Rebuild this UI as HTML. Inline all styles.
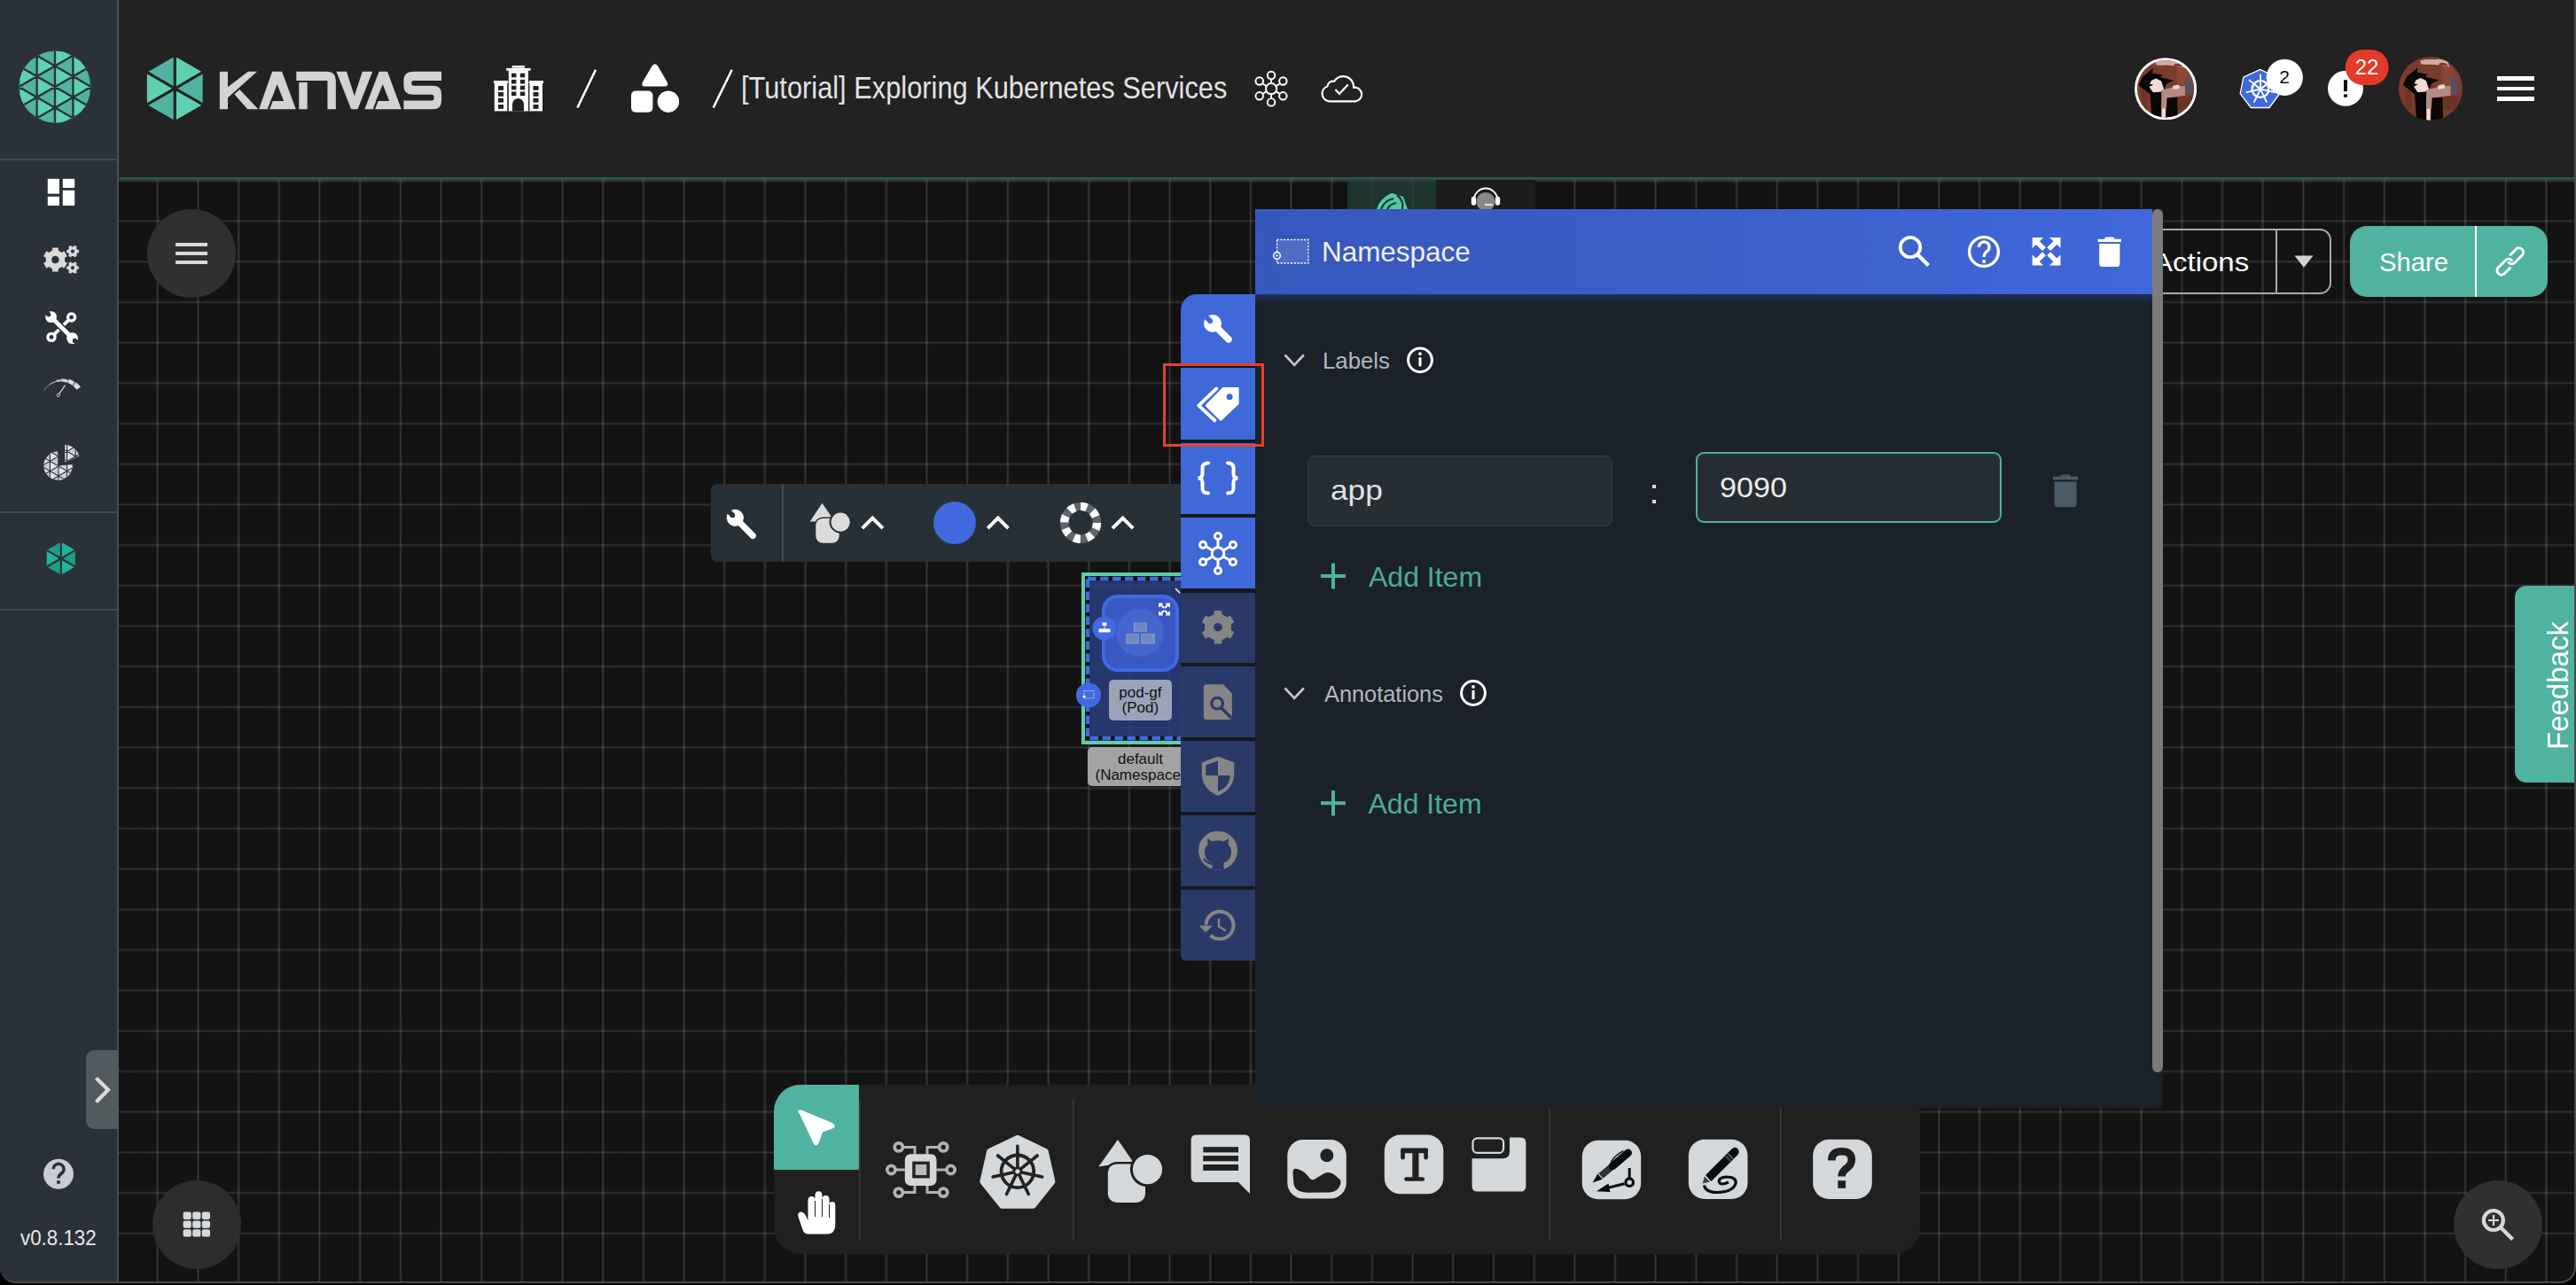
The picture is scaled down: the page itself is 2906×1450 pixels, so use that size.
<!DOCTYPE html>
<html><head><meta charset="utf-8">
<style>
*{box-sizing:border-box;margin:0;padding:0}
html,body{width:2906px;height:1450px;overflow:hidden;background:#000;font-family:"Liberation Sans",sans-serif}
.abs{position:absolute}
#win{position:absolute;left:0;top:0;width:2906px;height:1448px;border-right:2px solid #4a4a4a;border-bottom:2px solid #4a4a4a;border-bottom-left-radius:18px;border-bottom-right-radius:18px;overflow:hidden;background:#131313}
#grid{position:absolute;left:0;top:0;width:2906px;height:1448px;background-image:linear-gradient(to right,rgba(255,255,255,0) 0,rgba(255,255,255,.08) 0.6px,rgba(255,255,255,.155) 1.5px,rgba(255,255,255,.08) 2.4px,rgba(255,255,255,0) 3px,transparent 3px);background-size:45.68px 45.7px;background-position:176.3px 0}#gridh{position:absolute;left:0;top:0;width:2906px;height:1434px;background-image:linear-gradient(to bottom,rgba(255,255,255,0) 0,rgba(255,255,255,.07) 0.6px,rgba(255,255,255,.135) 1.5px,rgba(255,255,255,.07) 2.4px,rgba(255,255,255,0) 3px,transparent 3px);background-size:45.68px 45.7px;background-position:0 248.1px}
#header{position:absolute;left:0;top:0;width:2906px;height:200px;background:#222222}
#hline{position:absolute;left:134px;top:200px;width:2780px;height:6px;background:linear-gradient(to bottom,#2e5a54 0,#2e5a54 1.5px,rgba(46,80,74,.75) 2.5px,rgba(46,66,62,.45) 4px,rgba(40,50,50,0) 6px)}
#sidebar{position:absolute;left:0;top:0;width:134px;height:1448px;background:#2a3139;border-right:2px solid #474e54}
.sdiv{position:absolute;left:0;width:132px;height:2px;background:#444a52}
.t{position:absolute;white-space:nowrap;line-height:1}
</style></head><body>
<div id="win">
 <div id="grid"></div><div id="gridh"></div>
 <div id="header"></div>
<!--HEADER--><svg class="abs" style="left:0;top:0" width="900" height="200" viewBox="0 0 900 200"><polygon points="197.3,99.8 197.3,63.6 228.7,81.7" fill="#5fd0ad"/><polygon points="197.3,99.8 228.7,81.7 228.7,117.9" fill="#50b3a1"/><polygon points="197.3,99.8 228.7,117.9 197.3,136.0" fill="#5fd0ad"/><polygon points="197.3,99.8 197.3,136.0 165.9,117.9" fill="#50b3a1"/><polygon points="197.3,99.8 165.9,117.9 165.9,81.7" fill="#5fd0ad"/><polygon points="197.3,99.8 165.9,81.7 197.3,63.6" fill="#50b3a1"/><path d="M197.3,99.8L197.3,63.6M197.3,99.8L228.7,81.7M197.3,99.8L228.7,117.9M197.3,99.8L197.3,136.0M197.3,99.8L165.9,117.9M197.3,99.8L165.9,81.7" stroke="#222222" stroke-width="3.2" stroke-linecap="round"/><g transform="translate(240,70) scale(0.10481)" fill="#d3d3d3"><path d="M75,103H162V508H75Z"/><path d="M162,270L380,103H478L162,385Z"/><path d="M232,345L290,295L490,508H375Z"/><path fill-rule="evenodd" d="M497,508L640,103H745L895,508H612L590,508ZM693,240L765,420H625Z"/><path d="M900,103H1230Q1325,103 1325,200V508H1235V200H900Z"/><path d="M928,218H1018V508H928Z"/><path d="M1330,103H1440L1525,365L1610,103H1720L1560,508H1490Z"/><path fill-rule="evenodd" d="M1635,508L1790,103H1880L2030,508ZM1830,240L1900,420H1755Z"/><path d="M2160,103H2462V200H2165Q2140,200 2140,222V235Q2140,255 2162,255H2370Q2462,255 2462,345V415Q2462,508 2370,508H2055V415H2358Q2380,415 2380,395V370Q2380,350 2358,350H2150Q2055,350 2055,255V200Q2055,103 2160,103Z"/></g><g transform="translate(240,70) scale(0.10481)" stroke="#222222" stroke-width="22"><path d="M600,508L650,380"/><path d="M1735,508L1785,380"/></g><g fill="#ffffff"><rect x="577.6" y="74" width="14.2" height="2.6"/><rect x="571.2" y="76.9" width="27.4" height="2.9"/><rect x="573.8" y="79.5" width="22.2" height="45.9"/><rect x="556.9" y="91" width="16" height="3"/><rect x="597" y="91" width="16" height="3"/><rect x="557.8" y="93.5" width="16" height="31.9"/><rect x="596" y="93.5" width="16" height="31.9"/></g><g fill="#222222"><rect x="577" y="82.7" width="5.4" height="4.6"/><rect x="577" y="89.9" width="5.4" height="4.6"/><rect x="577" y="96.7" width="5.4" height="4.6"/><rect x="577" y="103.5" width="5.4" height="4.6"/><rect x="586.8" y="82.7" width="5.4" height="4.6"/><rect x="586.8" y="89.9" width="5.4" height="4.6"/><rect x="586.8" y="96.7" width="5.4" height="4.6"/><rect x="586.8" y="103.5" width="5.4" height="4.6"/><rect x="562" y="97" width="6" height="4.8"/><rect x="562" y="104" width="6" height="4.8"/><rect x="562" y="110.8" width="6" height="4.8"/><rect x="562" y="118" width="6" height="4.8"/><rect x="601.5" y="97" width="6" height="4.8"/><rect x="601.5" y="104" width="6" height="4.8"/><rect x="601.5" y="110.8" width="6" height="4.8"/><rect x="601.5" y="118" width="6" height="4.8"/><path d="M578,125.4V117.5A6.5,6.5 0 0 1 591,117.5V125.4Z"/><rect x="572.2" y="94" width="1.6" height="31.4"/><rect x="596" y="94" width="1.4" height="31.4"/></g><path d="M672,78.8L651.4,121.5M825.7,78.8L804.7,121.5" stroke="#fff" stroke-width="2.6"/><g fill="#fff"><path d="M735.5,74.5Q738.8,70 742.1,74.5L752.6,92.5Q755,97.6 749.5,97.6H728Q722.5,97.6 725,92.5Z"/><rect x="712" y="102.5" width="24.4" height="24.3" rx="5"/><circle cx="753.9" cy="114.7" r="12.2"/></g></svg><svg class="abs" style="left:1405px;top:70px" width="140" height="60" viewBox="0 0 2576 1104"><g stroke="#fff" stroke-width="36" fill="none"><circle cx="535" cy="555" r="112"/><circle cx="535" cy="275" r="78"/><circle cx="535" cy="835" r="78"/><circle cx="290" cy="395" r="78"/><circle cx="780" cy="395" r="78"/><circle cx="290" cy="705" r="78"/><circle cx="780" cy="705" r="78"/><path d="M535,443V353M535,667V757M437,500L358,450M633,500L712,450M437,610L358,660M633,610L712,660"/><path d="M1740,815H2290A135,135 0 0 0 2245,530A216,216 0 0 0 1845,400A118,118 0 0 0 1700,505A160,160 0 0 0 1740,815Z" stroke-width="40" stroke-linejoin="round"/><path d="M1865,570L1950,660L2130,470" stroke-width="40"/></g></svg><div class="t" id="title" style="left:836px;top:81px;font-size:35px;color:#e2e2e2;transform:scaleX(0.88);transform-origin:0 0">[Tutorial] Exploring Kubernetes Services</div><svg width="0" height="0" style="position:absolute"><defs><clipPath id="avc"><circle cx="628" cy="640" r="470"/></clipPath><clipPath id="avc2"><circle cx="628" cy="640" r="513"/></clipPath><symbol id="avart" viewBox="0 0 1256 1280"><g><circle cx="628" cy="640" r="520" fill="#7b3c2e"/>
<path d="M800,300Q900,250 1000,330L1080,520L1000,600L820,560Z" fill="#8a4634"/>
<path d="M460,190Q560,160 700,175Q760,150 900,200L930,290L800,270Q700,250 620,250Q520,260 470,240Z" fill="#d6aaa2"/>
<path d="M760,240Q830,200 900,250L900,280Q820,260 770,270Z" fill="#7b3c2e"/>
<path d="M180,580L250,440L420,300L410,380L580,410L540,450L760,500L640,560L610,650L520,700L440,760L380,740Z" fill="#0a0606"/>
<path d="M345,590L395,500L470,468L555,512L605,662L475,718L430,712Z" fill="#f0dcd2"/><path d="M320,548L425,572L350,612Z" fill="#0a0606"/>
<path d="M370,700L560,690L570,1150L400,1150Z" fill="#0a0606"/>
<path d="M560,660L760,610L950,590L950,750L660,790L650,960L555,960Z" fill="#b48a86"/>
<path d="M740,600Q800,560 860,580L850,640L750,650Z" fill="#e8d8c8"/>
<path d="M650,790L820,780L830,1150L630,1150Z" fill="#0a0606"/>
<path d="M560,960L625,960L625,1150L560,1150Z" fill="#f0dcd2"/>
<path d="M950,470L1060,450L1090,740L970,720Z" fill="#555060"/>
<path d="M830,780L1080,760L1060,960L840,980Z" fill="#6b3226"/>
<path d="M220,650Q300,640 320,700L330,1000L230,980Z" fill="#6e3428"/></g></symbol></defs></svg><svg class="abs" style="left:2407.9px;top:64.6px" width="70.2" height="70.5" viewBox="115 125 1026 1030"><circle cx="628" cy="640" r="513" fill="#fff"/><g clip-path="url(#avc)"><use href="#avart" x="0" y="0" width="1256" height="1280"/></g></svg><svg class="abs" style="left:2706px;top:64px" width="72" height="72" viewBox="115 127 1026 1026"><g clip-path="url(#avc2)"><use href="#avart" x="0" y="0" width="1256" height="1280"/></g></svg><svg class="abs" style="left:2515px;top:50px" width="190" height="80" viewBox="0 0 190 80"><polygon points="34.7,28.4 53.5,37.5 56.5,56.0 45.0,71.5 24.3,71.5 12.2,55.7 15.9,37.2" fill="#3f69dc" stroke="#fff" stroke-width="1.3" stroke-linejoin="round"/><circle cx="35" cy="50.5" r="9.4" fill="none" stroke="#fff" stroke-width="2.3"/><path d="M35.0,48.0L35.0,34.5M37.0,48.9L47.5,40.5M37.4,51.1L50.6,54.1M36.1,52.8L41.9,64.9M33.9,52.8L28.1,64.9M32.6,51.1L19.4,54.1M33.0,48.9L22.5,40.5" stroke="#fff" stroke-width="1.9" stroke-linecap="round"/><circle cx="35" cy="50.5" r="2.4" fill="#fff"/><circle cx="62.3" cy="37.3" r="20.6" fill="#fff"/><circle cx="131" cy="49.8" r="20" fill="#fff"/><rect x="129" y="40.2" width="4" height="12.9" fill="#111"/><rect x="129" y="56.4" width="4" height="3.3" fill="#111"/><rect x="130.9" y="5.9" width="48.7" height="40.2" rx="20.1" fill="#e5392a"/></svg><div class="t" style="left:2566px;top:76px;font-size:21px;color:#111;width:22px;text-align:center">2</div><div class="t" style="left:2650px;top:64px;font-size:24px;color:#fff;width:40px;text-align:center">22</div><div class="abs" style="left:2817px;top:86px;width:42px;height:5px;background:#fff"></div><div class="abs" style="left:2817px;top:97.8px;width:42px;height:4.6px;background:#fff"></div><div class="abs" style="left:2817px;top:109.4px;width:42px;height:4.6px;background:#fff"></div><!--/HEADER-->
 <div id="hline"></div>
<!--CANVAS1--><div class="abs" style="left:166px;top:235.8px;width:100px;height:100px;border-radius:50%;background:#303030"></div><div class="abs" style="left:197.8px;top:273.8px;width:36.4px;height:4.4px;background:#d5d9dc"></div><div class="abs" style="left:197.8px;top:283.7px;width:36.4px;height:4.4px;background:#d5d9dc"></div><div class="abs" style="left:197.8px;top:293.8px;width:36.4px;height:4.4px;background:#d5d9dc"></div><div class="abs" style="left:172px;top:1332px;width:100px;height:100px;border-radius:50%;background:#2d2d2d"></div><svg class="abs" style="left:200px;top:1360px" width="44" height="44" viewBox="200 1360 44 44" fill="#d5d9dc"><rect x="206.6" y="1367.6" width="9.2" height="8.4" rx="2.2"/><rect x="206.6" y="1377.4" width="9.2" height="8.4" rx="2.2"/><rect x="206.6" y="1387.2" width="9.2" height="8.4" rx="2.2"/><rect x="217.2" y="1367.6" width="9.2" height="8.4" rx="2.2"/><rect x="217.2" y="1377.4" width="9.2" height="8.4" rx="2.2"/><rect x="217.2" y="1387.2" width="9.2" height="8.4" rx="2.2"/><rect x="227.8" y="1367.6" width="9.2" height="8.4" rx="2.2"/><rect x="227.8" y="1377.4" width="9.2" height="8.4" rx="2.2"/><rect x="227.8" y="1387.2" width="9.2" height="8.4" rx="2.2"/></svg><div class="abs" style="left:2768px;top:1332px;width:100px;height:100px;border-radius:50%;background:#303030"></div><svg class="abs" style="left:2790px;top:1355px" width="60" height="60" viewBox="2790 1355 60 60"><circle cx="2812.9" cy="1377" r="11" fill="none" stroke="#d5d9dc" stroke-width="4.2"/><path d="M2821.5,1385.5L2834.5,1398.5" stroke="#d5d9dc" stroke-width="4.2"/><path d="M2807,1377H2819M2813,1371V1383" stroke="#d5d9dc" stroke-width="2.2"/></svg><!--/CANVAS1-->
<!--TB--><div class="abs" style="left:801.7px;top:546px;width:560px;height:88px;background:#283037;border-radius:7px"></div><div class="abs" style="left:882.4px;top:546px;width:2px;height:88px;background:#434a51"></div><svg class="abs" style="left:801px;top:546px" width="540" height="88" viewBox="801 546 540 88"><g fill="#fff"><circle cx="829.3" cy="584.3" r="9.6"/><path d="M829,584L849.3,604.5" stroke="#fff" stroke-width="7.2" stroke-linecap="round"/></g><path d="M826,581L818,573" stroke="#283037" stroke-width="5.6"/><circle cx="826.4" cy="581.4" r="2.8" fill="#283037"/><path d="M927.5,567.8L941.7,588.5L913.7,588.5Z" fill="#dcdcdc"/><rect x="918.8" y="583.4" width="29.4" height="30.9" rx="9.5" fill="#283037"/><rect x="920.3" y="584.9" width="26.4" height="27.9" rx="8" fill="#dcdcdc"/><circle cx="948.2" cy="589.2" r="12.6" fill="#283037"/><circle cx="948.2" cy="589.2" r="10.6" fill="#dcdcdc"/><path d="M972.7,596.1L984.3,584.6L995.9,596.1" stroke="#fff" stroke-width="4" fill="none"/><path d="M1114.2,596.1L1125.8,584.6L1137.4,596.1" stroke="#fff" stroke-width="4" fill="none"/><path d="M1255.0,596.1L1266.6,584.6L1278.2,596.1" stroke="#fff" stroke-width="4" fill="none"/><circle cx="1077" cy="590" r="24" fill="#4169dd"/><circle cx="1219.1" cy="589.8" r="18.4" fill="none" stroke="#5d6569" stroke-width="9.4"/><circle cx="1219.1" cy="589.8" r="18.4" fill="none" stroke="#fff" stroke-width="9.4" stroke-dasharray="7.225 7.225" transform="rotate(-90 1219.1 589.8)"/></svg><!--/TB-->
<!--BOTTOM--><div class="abs" style="left:2360px;top:258px;width:270.4px;height:74.3px;border:2px solid #a9a9a9;border-radius:13px"></div><div class="abs" style="left:2567px;top:259px;width:2px;height:72px;background:#a9a9a9"></div><div class="t" id="actt" style="left:2429px;top:280.5px;font-size:30px;color:#fff;transform:scaleX(1.1);transform-origin:0 0">Actions</div><svg class="abs" style="left:2585px;top:285px" width="30" height="20" viewBox="2585 285 30 20"><path d="M2588.5,288.5H2609.6L2599,301.7Z" fill="#d0d5d8"/></svg><div class="abs" style="left:2651px;top:255px;width:222.8px;height:79.7px;background:#50b2a0;border-radius:19px"></div><div class="abs" style="left:2792px;top:255px;width:2.4px;height:79.7px;background:#fff"></div><div class="t" id="sharet" style="left:2683.5px;top:281px;font-size:30px;color:#fff;transform:scaleX(0.975);transform-origin:0 0">Share</div><svg class="abs" style="left:2810px;top:272px" width="44" height="46" viewBox="2810 272 44 46" fill="none" stroke="#fff" stroke-width="3" stroke-linecap="round"><path d="M2832,287.5L2838.5,281A4.9,4.9 0 0 1 2845.4,287.9L2837,296.3A4.9,4.9 0 0 1 2830.1,296.3"/><path d="M2831.5,302.5L2825,309A4.9,4.9 0 0 1 2818.1,302.1L2826.5,293.7A4.9,4.9 0 0 1 2833.4,293.7"/></svg><div class="abs" style="left:2836.5px;top:660.7px;width:70px;height:222.3px;background:#50b2a0;border-radius:13px 0 0 13px"></div><div class="t" id="fbt" style="left:2868.5px;top:845.5px;font-size:33px;color:#fff;transform:rotate(-90deg);transform-origin:0 0">Feedback</div><div class="abs" style="left:873.2px;top:1224.2px;width:1293.1px;height:191.3px;background:#202020;border-radius:30px;overflow:hidden"><div class="abs" style="left:0;top:0;width:95.9px;height:95.9px;background:#50b2a0"></div></div><svg class="abs" style="left:873px;top:1224px" width="1294" height="192" viewBox="873 1224 1294 192"><rect x="968.9000000000001" y="1239.8" width="1.6" height="159.7" fill="#383838"/><rect x="1210.0" y="1239.8" width="1.6" height="159.7" fill="#383838"/><rect x="1747.1000000000001" y="1239.8" width="1.6" height="159.7" fill="#383838"/><rect x="2008.0" y="1239.8" width="1.6" height="159.7" fill="#383838"/><path d="M903,1256.5Q899,1253 903.5,1253.5L938.5,1268Q943,1271 938.5,1272.5L927.5,1276.5L922.5,1289.5Q920.5,1293.5 918.5,1289.5Z" fill="#fff" stroke="#fff" stroke-width="2" stroke-linejoin="round"/><path d="M906,1389L900.5,1373Q899,1368 903.5,1367.5Q907,1367.5 909,1372L911.5,1377V1354.5Q911.5,1350 915.5,1350Q919.5,1350 919.5,1354.5V1349Q919.5,1344.2 923.5,1344.2Q927.5,1344.2 927.5,1349V1353Q927.5,1349 931.5,1349Q935.5,1349 935.5,1353V1359Q935.5,1356 939,1356Q942.3,1356 942.3,1360V1381Q942.3,1392.5 933,1392.5H912Q908,1392.5 906,1389Z" fill="#fff"/><path d="M919.5,1355V1373M927.5,1353V1373M935.5,1359V1374" stroke="#202020" stroke-width="1" /><path d="M1013.8,1294.4H1032V1302.2M1064.2,1294.4H1046V1302.2M1013.8,1345.6H1032V1337.9M1064.2,1345.6H1046V1337.9M1005.4,1320H1020.8M1072.6,1320H1056.5" stroke="#b0b2b4" stroke-width="3" fill="none"/><g fill="#b0b2b4"><circle cx="1013.8" cy="1294.4" r="6.4"/><circle cx="1064.2" cy="1294.4" r="6.4"/><circle cx="1013.8" cy="1345.6" r="6.4"/><circle cx="1064.2" cy="1345.6" r="6.4"/><circle cx="1005.4" cy="1320" r="6.4"/><circle cx="1072.6" cy="1320" r="6.4"/></g><g fill="#202020"><circle cx="1013.8" cy="1294.4" r="2.7"/><circle cx="1064.2" cy="1294.4" r="2.7"/><circle cx="1013.8" cy="1345.6" r="2.7"/><circle cx="1064.2" cy="1345.6" r="2.7"/><circle cx="1005.4" cy="1320" r="2.7"/><circle cx="1072.6" cy="1320" r="2.7"/></g><rect x="1020.8" y="1302.2" width="35.7" height="35.7" rx="6.5" fill="#d5d8db"/><rect x="1029.2" y="1310.6" width="19.6" height="18.9" fill="#222"/><rect x="1032.7" y="1314" width="12.6" height="12" fill="#b8b9ba"/><polygon points="1147.9,1284.3 1179.2,1299.4 1186.9,1333.2 1165.3,1360.3 1130.5,1360.3 1108.9,1333.2 1116.6,1299.4" fill="#d5d8db" stroke="#d5d8db" stroke-width="7" stroke-linejoin="round"/><circle cx="1147.9" cy="1321.8" r="18.3" fill="none" stroke="#222" stroke-width="3.8"/><path d="M1147.9,1317.8L1147.9,1293.3M1151.0,1319.3L1170.2,1304.0M1151.8,1322.7L1175.7,1328.1M1149.6,1325.4L1160.3,1347.5M1146.2,1325.4L1135.5,1347.5M1144.0,1322.7L1120.1,1328.1M1144.8,1319.3L1125.6,1304.0" stroke="#222" stroke-width="3.6" stroke-linecap="round"/><circle cx="1147.9" cy="1321.8" r="5.5" fill="#222"/><circle cx="1147.9" cy="1321.8" r="2.6" fill="#d5d8db"/><path d="M1261,1286.1L1277.8,1310.5L1239.3,1316.5Z" fill="#d5d8db"/><rect x="1247.3" y="1310.9" width="47.2" height="48.5" rx="12.5" fill="#202020"/><rect x="1249.8" y="1313.4" width="42.2" height="43.5" rx="10" fill="#d5d8db"/><circle cx="1294.5" cy="1319.6" r="19.6" fill="#202020"/><circle cx="1294.5" cy="1319.6" r="16.6" fill="#d5d8db"/><path d="M1349.6,1280.5H1404Q1410,1280.5 1410,1286.5V1347L1397,1334H1349.6Q1343.6,1334 1343.6,1328V1286.5Q1343.6,1280.5 1349.6,1280.5Z" fill="#d5d8db"/><g fill="#202020"><rect x="1357.3" y="1294.2" width="39.7" height="6.2"/><rect x="1357.3" y="1304.1" width="39.7" height="6.2"/><rect x="1357.3" y="1314" width="39.7" height="6.9"/></g><rect x="1452.3" y="1286" width="66.5" height="66.5" rx="18" fill="#d5d8db"/><path d="M1458.5,1324Q1458,1316 1466,1320Q1472,1322 1477,1329Q1480,1333 1484,1330L1494,1324Q1500,1321 1506,1326L1511.5,1331Q1513.5,1333 1511.5,1338Q1509,1344.5 1500,1345.5L1476,1345.8Q1461,1345.5 1459.5,1336Z" fill="#202020"/><circle cx="1496.8" cy="1303.7" r="7.5" fill="#202020"/><rect x="1561.8" y="1280.6" width="66.5" height="66.7" rx="18" fill="#d5d8db"/><g fill="#202020"><rect x="1580.2" y="1295.5" width="30.7" height="5.8" rx="2.5"/><rect x="1580.2" y="1295.5" width="4.6" height="13" rx="2.3"/><rect x="1606.3" y="1295.5" width="4.6" height="13" rx="2.3"/><rect x="1593.3" y="1298" width="7.2" height="32"/><rect x="1584.2" y="1328.2" width="22.9" height="4.6" rx="2.3"/></g><path d="M1660.6,1307.3H1695.5Q1703,1307.3 1703,1299.5V1283.4H1715.4Q1721.4,1283.4 1721.4,1289.4V1338.5Q1721.4,1344.5 1715.4,1344.5H1666.6Q1660.6,1344.5 1660.6,1338.5Z" fill="#d5d8db"/><rect x="1661.5" y="1284.3" width="34.6" height="16.6" rx="5" fill="none" stroke="#d5d8db" stroke-width="2.2"/><rect x="1784.8" y="1286.8" width="66.4" height="66.4" rx="18" fill="#d5d8db"/><path d="M1796.6,1334.6L1807.7,1330.7L1802.4,1324.4Z" fill="#030c10"/><path d="M1805.9,1326.8L1818.4,1316.3" stroke="#2e3236" stroke-width="7.6"/><path d="M1819.3,1315.6L1836.6,1301.0" stroke="#030c10" stroke-width="8.8" stroke-linecap="round"/><path d="M1817.4,1311.2Q1820.9,1304.4 1831.3,1298.7" stroke="#030c10" stroke-width="1.4" fill="none"/><path d="M1838.2,1318V1330M1807,1342L1832.5,1335.8" stroke="#030c10" stroke-width="3"/><circle cx="1838.2" cy="1334.2" r="4.3" fill="none" stroke="#030c10" stroke-width="3.2"/><path d="M1801,1344.3L1814.5,1335.5L1816.5,1345Z" fill="#030c10"/><rect x="1904.9" y="1285.8" width="66.6" height="67.1" rx="18" fill="#d5d8db"/><path d="M1924,1326L1953,1297Q1957.5,1293 1960.5,1296.5Q1963.5,1300 1959.5,1304L1930.5,1333Z" fill="#030c10"/><path d="M1946.5,1304L1953,1310.5" stroke="#3a3f44" stroke-width="2.6"/><path d="M1949,1301.5L1955.5,1308" stroke="#d5d8db" stroke-width="1"/><path d="M1923,1327.5L1929,1333.5L1920.5,1335.5Z" fill="#3a3f44"/><path d="M1922.5,1337.5Q1924,1345.5 1937,1345.5Q1955,1345 1958,1335.5Q1959.5,1328 1947,1328Q1938,1329 1939.5,1334Q1941,1338 1950,1334" stroke="#030c10" stroke-width="3.2" fill="none"/><rect x="2045.2" y="1285.8" width="66.6" height="67.1" rx="18" fill="#d5d8db"/><path d="M2066.3,1309.5Q2066.5,1299.3 2077.6,1299.3Q2088.8,1299.3 2088.8,1308.5Q2088.8,1314 2083.5,1318Q2077.6,1322.5 2077.6,1327.5" stroke="#202020" stroke-width="8.6" fill="none"/><rect x="2073.3" y="1332.2" width="8.8" height="8.6" fill="#202020"/></svg><!--/BOTTOM-->
<!--P1--><div class="abs" style="left:1220px;top:646.4px;width:140px;height:193.6px;border:4.6px solid #5dcfa8"></div><div class="abs" style="left:1224.8px;top:651px;width:130px;height:184.5px;background:rgba(42,62,128,0.84)"></div><svg class="abs" style="left:1224px;top:650px" width="120" height="186" viewBox="1224 650 120 186"><rect x="1227" y="653" width="140" height="180" fill="none" stroke="#111" stroke-width="4.4"/><rect x="1227" y="653" width="140" height="180" fill="none" stroke="#4169e1" stroke-width="4.4" stroke-dasharray="9.5 4.5"/></svg><div class="abs" style="left:1243px;top:671px;width:86.5px;height:86.7px;border:4.5px solid #4169e1;border-radius:18px;background:rgba(60,92,204,0.9)"></div><div class="abs" style="left:1259px;top:687px;width:54px;height:54px;border-radius:50%;background:#4565cd"></div><svg class="abs" style="left:1225px;top:660px" width="115" height="110" viewBox="1225 660 115 110"><g fill="#7d8fc6"><rect x="1278.8" y="702.5" width="15.1" height="10.5"/><rect x="1270" y="715" width="15" height="11.6"/><rect x="1287" y="715" width="16" height="11.6"/></g><g stroke="#5d72b8" stroke-width="0.9"><path d="M1282,704V711.5M1285,704V711.5M1288,704V711.5M1291,704V711.5M1273,716.5V725M1276,716.5V725M1279,716.5V725M1282,716.5V725M1290,716.5V725M1293,716.5V725M1296,716.5V725M1299,716.5V725"/></g><g stroke="#fff" stroke-width="1.8" fill="none"><path d="M1309,682L1313,686M1318,682L1314,686M1309,693L1313,689M1318,693L1314,689"/><path d="M1308,685V681.5H1311.5M1319,685V681.5H1315.5M1308,690V693.5H1311.5M1319,690V693.5H1315.5"/></g><path d="M1326,664L1331,669" stroke="#fff" stroke-width="1.5"/><circle cx="1246" cy="709" r="13.6" fill="#4169e1"/><g fill="#fff"><rect x="1243.5" y="702.5" width="5" height="3.5"/><rect x="1239.5" y="709.5" width="13" height="4"/></g><path d="M1246,706V709.5" stroke="#fff" stroke-width="0.8"/></svg><svg class="abs" style="left:1210px;top:765px" width="40" height="40" viewBox="1210 765 40 40"><circle cx="1228" cy="784.4" r="14" fill="#4169e1"/><rect x="1223" y="779.5" width="11" height="8.5" fill="none" stroke="#c8d2f4" stroke-width="1" stroke-dasharray="1.5 1"/><circle cx="1223" cy="786" r="1.6" fill="#fff"/></svg><div class="abs" style="left:1251px;top:767px;width:70.8px;height:45.8px;background:#9aa3b8;border-radius:5px"></div><div class="t" style="left:1251px;top:772.5px;width:70.8px;text-align:center;font-size:17px;line-height:17.5px;color:#111;white-space:normal">pod-gf<br>(Pod)</div><div class="abs" style="left:1227.3px;top:843px;width:120px;height:44px;background:#a3a3a3;border-radius:5px"></div><div class="t" style="left:1227px;top:847.5px;width:119px;text-align:center;font-size:17px;line-height:18.5px;color:#111;white-space:normal">default<br>(Namespace)</div><div class="abs" style="left:1332px;top:332px;width:84px;height:751.5px;background:#151719;border-radius:18px 0 0 6px;overflow:hidden"><div class="abs" style="left:0;top:0.0px;width:84px;height:79.3px;background:#3f68d8"></div><div class="abs" style="left:0;top:83.3px;width:84px;height:80.7px;background:#3f68d8"></div><div class="abs" style="left:0;top:168.0px;width:84px;height:80.4px;background:#3f68d8"></div><div class="abs" style="left:0;top:252.3px;width:84px;height:79.7px;background:#3f68d8"></div><div class="abs" style="left:0;top:336.6px;width:84px;height:79.7px;background:#2a3a68"></div><div class="abs" style="left:0;top:420.4px;width:84px;height:79.8px;background:#2a3a68"></div><div class="abs" style="left:0;top:504.3px;width:84px;height:79.7px;background:#2a3a68"></div><div class="abs" style="left:0;top:588.0px;width:84px;height:80.0px;background:#2a3a68"></div><div class="abs" style="left:0;top:672.0px;width:84px;height:79.5px;background:#2a3a68"></div></div><svg class="abs" style="left:1332px;top:332px" width="84" height="752" viewBox="1332 332 84 752"><g><circle cx="1368" cy="365" r="10" fill="#fff"/><path d="M1368,365L1386,383" stroke="#fff" stroke-width="7.5" stroke-linecap="round"/><path d="M1365,362L1357,354" stroke="#3f68d8" stroke-width="5.6"/><circle cx="1365.2" cy="362.2" r="2.9" fill="#3f68d8"/></g><path d="M1372.3,438.5L1352.2,457.6L1370.5,474.5" stroke="#fff" stroke-width="3.8" fill="none" stroke-linejoin="round" stroke-linecap="round"/><path d="M1380,438.2H1396.4V455.5L1377.3,473.6L1361,457.6Z" fill="#fff" stroke="#fff" stroke-width="2.4" stroke-linejoin="round"/><circle cx="1387.1" cy="447.8" r="3.5" fill="#3f68d8"/><g fill="none" stroke="#fff" stroke-width="4" stroke-linecap="round"><path d="M1363,522.5Q1356.5,522.5 1356.5,528V534.5Q1356.5,539.5 1351.5,539.5Q1356.5,539.5 1356.5,544.5V551Q1356.5,556.5 1363,556.5"/><path d="M1385,522.5Q1391.5,522.5 1391.5,528V534.5Q1391.5,539.5 1396.5,539.5Q1391.5,539.5 1391.5,544.5V551Q1391.5,556.5 1385,556.5"/></g><g stroke="#fff" stroke-width="3" fill="none"><circle cx="1374" cy="624.5" r="6.8"/><circle cx="1374.0" cy="605.0" r="3.6"/><circle cx="1390.9" cy="614.8" r="3.6"/><circle cx="1390.9" cy="634.2" r="3.6"/><circle cx="1374.0" cy="644.0" r="3.6"/><circle cx="1357.1" cy="634.2" r="3.6"/><circle cx="1357.1" cy="614.8" r="3.6"/><path d="M1374.0,617.7L1374.0,608.6M1379.9,621.1L1387.8,616.5M1379.9,627.9L1387.8,632.5M1374.0,631.3L1374.0,640.4M1368.1,627.9L1360.2,632.5M1368.1,621.1L1360.2,616.5"/></g><path fill="#858585" fill-rule="evenodd" stroke="#858585" stroke-width="2" stroke-linejoin="round" d="M1370.62,693.50L1370.63,690.02L1377.37,690.02L1377.38,693.50L1384.61,697.67L1387.63,695.94L1391.00,701.78L1387.99,703.53L1387.99,711.87L1391.00,713.62L1387.63,719.46L1384.61,717.73L1377.38,721.90L1377.37,725.38L1370.63,725.38L1370.62,721.90L1363.39,717.73L1360.37,719.46L1357.00,713.62L1360.01,711.87L1360.01,703.53L1357.00,701.78L1360.37,695.94L1363.39,697.67ZM1379.80,707.70A5.8,5.8 0 1 0 1368.20,707.70A5.8,5.8 0 1 0 1379.80,707.70Z"/><path d="M1361,772.2H1380L1389.8,782.5V808.5Q1389.8,812 1386.3,812H1361.4Q1357.9,812 1357.9,808.5V775.7Q1357.9,772.2 1361,772.2Z" fill="#858585"/><circle cx="1373.1" cy="793.7" r="6.3" fill="none" stroke="#2a3a68" stroke-width="3.2"/><path d="M1377.5,798.5L1389,810" stroke="#2a3a68" stroke-width="3.6"/><path d="M1374,853.6L1392.3,860.5V873Q1392.3,890 1374,898Q1355.8,890 1355.8,873V860.5Z" fill="#858585"/><path d="M1374,858.5V875H1360.2V863.5Z M1374,875H1387.8Q1387,888 1374,893Z" fill="#2a3a68"/><circle cx="1374" cy="959.7" r="22" fill="#858585"/><path d="M1367.5,981.5V973.5Q1359,971 1359,961Q1359,956 1362.5,953L1362,946L1367.5,949.5Q1374,947.5 1380.5,949.5L1386,946L1385.5,953Q1389,956 1389,961Q1389,971 1380.5,973.5V981.5Z" fill="#2a3a68"/><path d="M1358,969Q1361,973.5 1367.5,975" stroke="#2a3a68" stroke-width="2.4" fill="none"/><path d="M1360.5,1043.5A15.5,15.5 0 1 1 1365.5,1055.5" stroke="#858585" stroke-width="4" fill="none"/><path d="M1352.6,1044.5H1368L1360.3,1052Z" fill="#858585"/><path d="M1375,1036.4V1045.5L1383,1050.3" stroke="#858585" stroke-width="2.4" fill="none"/></svg><!--/P1-->
<!--P2--><div class="abs" style="left:1520.2px;top:203px;width:99.8px;height:34px;background:rgba(34,64,58,0.75)"></div><div class="abs" style="left:1620px;top:203px;width:112px;height:34px;background:#1c1c1c"></div><svg class="abs" style="left:1520px;top:203px" width="212" height="34" viewBox="1520 203 212 34"><g fill="#4fc9a8"><path d="M1570,217.7L1583,222L1588,236H1553Q1556,224 1570,217.7Z"/></g><g stroke="#1e302e" stroke-width="2.2" fill="none"><path d="M1558,236Q1562,226 1572,224M1565,236Q1568,230 1575,229M1576,220Q1584,226 1582,236"/></g><circle cx="1676" cy="227.5" r="10.5" fill="#888"/><path d="M1662.5,226.5A13.5,14 0 0 1 1689.5,226.5" stroke="#fff" stroke-width="1.8" fill="none"/><rect x="1659.8" y="221.8" width="5.4" height="10" rx="2.7" fill="#fff"/><rect x="1686.8" y="221.8" width="5.4" height="10" rx="2.7" fill="#fff"/><path d="M1675,231H1684" stroke="#fff" stroke-width="1.5"/></svg><div class="abs" style="left:1416px;top:236px;width:1024px;height:1013.7px;background:#1a2128;border-radius:0 0 6px 0"></div><div class="abs" style="left:1416px;top:236px;width:1012px;height:96px;background:linear-gradient(to right,#3657bc,#3b5fc9 50%,#4068da)"></div><div class="abs" style="left:1416px;top:332px;width:1012px;height:12px;background:linear-gradient(to bottom,rgba(35,55,110,0.7),rgba(26,33,40,0))"></div><div class="abs" style="left:2427.9px;top:235.7px;width:12.1px;height:974px;background:#7b7b7b;border-radius:6px"></div><svg class="abs" style="left:1430px;top:260px" width="60" height="45" viewBox="1430 260 60 45"><rect x="1440.5" y="270.5" width="35.5" height="26.5" fill="rgba(255,255,255,0.13)" stroke="#fff" stroke-width="1.3" stroke-dasharray="2.2 1.6"/><circle cx="1440.5" cy="288.4" r="3.8" fill="#3657bc" stroke="#fff" stroke-width="1.6"/><circle cx="1440.5" cy="288.4" r="1.2" fill="#fff"/></svg><div class="t" id="nstitle" style="left:1491px;top:268px;font-size:32px;color:#f0f0f0;transform:scaleX(0.982);transform-origin:0 0">Namespace</div><svg class="abs" style="left:2130px;top:255px" width="280" height="60" viewBox="2130 255 280 60" fill="none" stroke="#fff"><circle cx="2155" cy="279" r="11.2" stroke-width="3.8"/><path d="M2163,287L2175.5,299.5" stroke-width="4.2"/><circle cx="2238" cy="284" r="16.4" stroke-width="3.4"/><path d="M2232.5,279A5.8,5.8 0 1 1 2241.5,283.5Q2238.2,285.8 2238.2,290" stroke-width="3.3"/><rect x="2236.4" y="293.2" width="3.6" height="3.6" fill="#fff" stroke="none"/><g fill="#fff" stroke="none"><path d="M2292.7,268.0L2305.2,268.0L2292.7,280.0Z"/><path d="M2292.7,299.4L2305.2,299.4L2292.7,287.4Z"/><path d="M2324.5,268.0L2312.0,268.0L2324.5,280.0Z"/><path d="M2324.5,299.4L2312.0,299.4L2324.5,287.4Z"/></g><path d="M2296.7,272.0L2306.0,281.1M2296.7,295.4L2306.0,286.3M2320.5,272.0L2311.2,281.1M2320.5,295.4L2311.2,286.3" stroke="#fff" stroke-width="5.4"/><g fill="#fff" stroke="none"><rect x="2366.6" y="269.8" width="26.4" height="3.2"/><path d="M2374,269.8Q2374,267.4 2376.5,267.4H2383Q2385.5,267.4 2385.5,269.8Z"/><path d="M2368.2,275H2391.4V297.5Q2391.4,301 2388,301H2371.6Q2368.2,301 2368.2,297.5Z"/></g></svg><svg class="abs" style="left:1440px;top:380px" width="200" height="50" viewBox="1440 380 200 50"><path d="M1449.5,400.5L1460.2,411.8L1470.8,400.5" stroke="#c8c8c8" stroke-width="2.6" fill="none"/><circle cx="1602" cy="406.3" r="13.4" fill="none" stroke="#fff" stroke-width="3"/><rect x="1600.5" y="403.3" width="3" height="10" fill="#fff"/><circle cx="1602" cy="399.2" r="1.9" fill="#fff"/></svg><div class="t" id="lbl1" style="left:1491.5px;top:394px;font-size:26px;color:#b3b7b9;transform:scaleX(0.99);transform-origin:0 0">Labels</div><div class="abs" style="left:1474.6px;top:514.3px;width:344px;height:79.3px;background:#272e33;border:1.5px solid #3a4146;border-radius:9px"></div><div class="t" id="appt" style="left:1501px;top:537px;font-size:32px;color:#e2e2e2;transform:scaleX(1.1);transform-origin:0 0">app</div><div class="abs" style="left:1864px;top:547px;width:4px;height:4px;background:#ddd"></div><div class="abs" style="left:1864px;top:564px;width:4px;height:4px;background:#ddd"></div><div class="abs" style="left:1913px;top:510.2px;width:344.8px;height:79.8px;background:#272e33;border:2.5px solid #4fb0a0;border-radius:9px"></div><div class="t" id="v9090" style="left:1940px;top:534.5px;font-size:31px;color:#ececec;transform:scaleX(1.1);transform-origin:0 0">9090</div><svg class="abs" style="left:2310px;top:530px" width="40" height="48" viewBox="2310 530 40 48" fill="#4a5a66"><rect x="2315.9" y="537.8" width="28.1" height="3.6"/><path d="M2324,537.8Q2324,535.6 2326.3,535.6H2333.6Q2335.9,535.6 2335.9,537.8Z"/><path d="M2317.5,543.5H2342.5V568.8Q2342.5,572.2 2339,572.2H2321Q2317.5,572.2 2317.5,568.8Z"/></svg><svg class="abs" style="left:1485px;top:630px" width="40" height="40" viewBox="1485 630 40 40"><path d="M1504,635.6V664.5M1490,650H1518" stroke="#50b2a0" stroke-width="4"/></svg><div class="t" id="add1" style="left:1544px;top:634.5px;font-size:32px;color:#4cab99">Add Item</div><svg class="abs" style="left:1440px;top:760px" width="250" height="50" viewBox="1440 760 250 50"><path d="M1449.5,776.5L1460.2,787.8L1470.8,776.5" stroke="#c8c8c8" stroke-width="2.6" fill="none"/><circle cx="1662" cy="782" r="13.4" fill="none" stroke="#fff" stroke-width="3"/><rect x="1660.5" y="779" width="3" height="10" fill="#fff"/><circle cx="1662" cy="774.9" r="1.9" fill="#fff"/></svg><div class="t" id="ann" style="left:1493.5px;top:770px;font-size:26px;color:#b3b7b9;transform:scaleX(0.975);transform-origin:0 0">Annotations</div><svg class="abs" style="left:1485px;top:885px" width="40" height="40" viewBox="1485 885 40 40"><path d="M1504,891.9V920.4M1490,906.2H1518" stroke="#50b2a0" stroke-width="4"/></svg><div class="t" id="add2" style="left:1543.5px;top:890.5px;font-size:32px;color:#4cab99">Add Item</div><div class="abs" style="left:1311.8px;top:410px;width:114px;height:93.5px;border:3px solid #e5422b"></div><!--/P2-->
 <div id="sidebar">
  <svg class="abs" style="left:0;top:0" width="132" height="180" viewBox="0 0 132 180">
<defs><clipPath id="lc"><circle cx="62.0" cy="98.0" r="40.5"/></clipPath></defs>
<g clip-path="url(#lc)"><rect x="0" y="0" width="132" height="180" fill="#4fb4a0"/>
<polygon points="-19.60,-43.34 -19.60,-19.78 0.80,-31.56" fill="#5ed1ae"/>
<polygon points="-19.60,-19.78 -19.60,3.78 0.80,-8.00" fill="#5ed1ae"/>
<polygon points="-19.60,3.78 -19.60,27.33 0.80,15.55" fill="#5ed1ae"/>
<polygon points="-19.60,27.33 -19.60,50.89 0.80,39.11" fill="#5ed1ae"/>
<polygon points="-19.60,50.89 -19.60,74.44 0.80,62.67" fill="#5ed1ae"/>
<polygon points="-19.60,74.44 -19.60,98.00 0.80,86.22" fill="#5ed1ae"/>
<polygon points="-19.60,98.00 -19.60,121.56 0.80,109.78" fill="#5ed1ae"/>
<polygon points="-19.60,121.56 -19.60,145.11 0.80,133.33" fill="#5ed1ae"/>
<polygon points="-19.60,145.11 -19.60,168.67 0.80,156.89" fill="#5ed1ae"/>
<polygon points="-19.60,168.67 -19.60,192.22 0.80,180.45" fill="#5ed1ae"/>
<polygon points="-19.60,192.22 -19.60,215.78 0.80,204.00" fill="#5ed1ae"/>
<polygon points="-19.60,215.78 -19.60,239.34 0.80,227.56" fill="#5ed1ae"/>
<polygon points="0.80,-31.56 0.80,-8.00 21.20,-19.78" fill="#5ed1ae"/>
<polygon points="0.80,-8.00 0.80,15.55 21.20,3.78" fill="#5ed1ae"/>
<polygon points="0.80,15.55 0.80,39.11 21.20,27.33" fill="#5ed1ae"/>
<polygon points="0.80,39.11 0.80,62.67 21.20,50.89" fill="#5ed1ae"/>
<polygon points="0.80,62.67 0.80,86.22 21.20,74.44" fill="#5ed1ae"/>
<polygon points="0.80,86.22 0.80,109.78 21.20,98.00" fill="#5ed1ae"/>
<polygon points="0.80,109.78 0.80,133.33 21.20,121.56" fill="#5ed1ae"/>
<polygon points="0.80,133.33 0.80,156.89 21.20,145.11" fill="#5ed1ae"/>
<polygon points="0.80,156.89 0.80,180.45 21.20,168.67" fill="#5ed1ae"/>
<polygon points="0.80,180.45 0.80,204.00 21.20,192.22" fill="#5ed1ae"/>
<polygon points="0.80,204.00 0.80,227.56 21.20,215.78" fill="#5ed1ae"/>
<polygon points="0.80,227.56 0.80,251.11 21.20,239.34" fill="#5ed1ae"/>
<polygon points="21.20,-43.34 21.20,-19.78 41.60,-31.56" fill="#5ed1ae"/>
<polygon points="21.20,-19.78 21.20,3.78 41.60,-8.00" fill="#5ed1ae"/>
<polygon points="21.20,3.78 21.20,27.33 41.60,15.55" fill="#5ed1ae"/>
<polygon points="21.20,27.33 21.20,50.89 41.60,39.11" fill="#5ed1ae"/>
<polygon points="21.20,50.89 21.20,74.44 41.60,62.67" fill="#5ed1ae"/>
<polygon points="21.20,74.44 21.20,98.00 41.60,86.22" fill="#5ed1ae"/>
<polygon points="21.20,98.00 21.20,121.56 41.60,109.78" fill="#5ed1ae"/>
<polygon points="21.20,121.56 21.20,145.11 41.60,133.33" fill="#5ed1ae"/>
<polygon points="21.20,145.11 21.20,168.67 41.60,156.89" fill="#5ed1ae"/>
<polygon points="21.20,168.67 21.20,192.22 41.60,180.45" fill="#5ed1ae"/>
<polygon points="21.20,192.22 21.20,215.78 41.60,204.00" fill="#5ed1ae"/>
<polygon points="21.20,215.78 21.20,239.34 41.60,227.56" fill="#5ed1ae"/>
<polygon points="41.60,-31.56 41.60,-8.00 62.00,-19.78" fill="#5ed1ae"/>
<polygon points="41.60,-8.00 41.60,15.55 62.00,3.78" fill="#5ed1ae"/>
<polygon points="41.60,15.55 41.60,39.11 62.00,27.33" fill="#5ed1ae"/>
<polygon points="41.60,39.11 41.60,62.67 62.00,50.89" fill="#5ed1ae"/>
<polygon points="41.60,62.67 41.60,86.22 62.00,74.44" fill="#5ed1ae"/>
<polygon points="41.60,86.22 41.60,109.78 62.00,98.00" fill="#5ed1ae"/>
<polygon points="41.60,109.78 41.60,133.33 62.00,121.56" fill="#5ed1ae"/>
<polygon points="41.60,133.33 41.60,156.89 62.00,145.11" fill="#5ed1ae"/>
<polygon points="41.60,156.89 41.60,180.45 62.00,168.67" fill="#5ed1ae"/>
<polygon points="41.60,180.45 41.60,204.00 62.00,192.22" fill="#5ed1ae"/>
<polygon points="41.60,204.00 41.60,227.56 62.00,215.78" fill="#5ed1ae"/>
<polygon points="41.60,227.56 41.60,251.11 62.00,239.34" fill="#5ed1ae"/>
<polygon points="62.00,-43.34 62.00,-19.78 82.40,-31.56" fill="#5ed1ae"/>
<polygon points="62.00,-19.78 62.00,3.78 82.40,-8.00" fill="#5ed1ae"/>
<polygon points="62.00,3.78 62.00,27.33 82.40,15.55" fill="#5ed1ae"/>
<polygon points="62.00,27.33 62.00,50.89 82.40,39.11" fill="#5ed1ae"/>
<polygon points="62.00,50.89 62.00,74.44 82.40,62.67" fill="#5ed1ae"/>
<polygon points="62.00,74.44 62.00,98.00 82.40,86.22" fill="#5ed1ae"/>
<polygon points="62.00,98.00 62.00,121.56 82.40,109.78" fill="#5ed1ae"/>
<polygon points="62.00,121.56 62.00,145.11 82.40,133.33" fill="#5ed1ae"/>
<polygon points="62.00,145.11 62.00,168.67 82.40,156.89" fill="#5ed1ae"/>
<polygon points="62.00,168.67 62.00,192.22 82.40,180.45" fill="#5ed1ae"/>
<polygon points="62.00,192.22 62.00,215.78 82.40,204.00" fill="#5ed1ae"/>
<polygon points="62.00,215.78 62.00,239.34 82.40,227.56" fill="#5ed1ae"/>
<polygon points="82.40,-31.56 82.40,-8.00 102.80,-19.78" fill="#5ed1ae"/>
<polygon points="82.40,-8.00 82.40,15.55 102.80,3.78" fill="#5ed1ae"/>
<polygon points="82.40,15.55 82.40,39.11 102.80,27.33" fill="#5ed1ae"/>
<polygon points="82.40,39.11 82.40,62.67 102.80,50.89" fill="#5ed1ae"/>
<polygon points="82.40,62.67 82.40,86.22 102.80,74.44" fill="#5ed1ae"/>
<polygon points="82.40,86.22 82.40,109.78 102.80,98.00" fill="#5ed1ae"/>
<polygon points="82.40,109.78 82.40,133.33 102.80,121.56" fill="#5ed1ae"/>
<polygon points="82.40,133.33 82.40,156.89 102.80,145.11" fill="#5ed1ae"/>
<polygon points="82.40,156.89 82.40,180.45 102.80,168.67" fill="#5ed1ae"/>
<polygon points="82.40,180.45 82.40,204.00 102.80,192.22" fill="#5ed1ae"/>
<polygon points="82.40,204.00 82.40,227.56 102.80,215.78" fill="#5ed1ae"/>
<polygon points="82.40,227.56 82.40,251.11 102.80,239.34" fill="#5ed1ae"/>
<polygon points="102.80,-43.34 102.80,-19.78 123.20,-31.56" fill="#5ed1ae"/>
<polygon points="102.80,-19.78 102.80,3.78 123.20,-8.00" fill="#5ed1ae"/>
<polygon points="102.80,3.78 102.80,27.33 123.20,15.55" fill="#5ed1ae"/>
<polygon points="102.80,27.33 102.80,50.89 123.20,39.11" fill="#5ed1ae"/>
<polygon points="102.80,50.89 102.80,74.44 123.20,62.67" fill="#5ed1ae"/>
<polygon points="102.80,74.44 102.80,98.00 123.20,86.22" fill="#5ed1ae"/>
<polygon points="102.80,98.00 102.80,121.56 123.20,109.78" fill="#5ed1ae"/>
<polygon points="102.80,121.56 102.80,145.11 123.20,133.33" fill="#5ed1ae"/>
<polygon points="102.80,145.11 102.80,168.67 123.20,156.89" fill="#5ed1ae"/>
<polygon points="102.80,168.67 102.80,192.22 123.20,180.45" fill="#5ed1ae"/>
<polygon points="102.80,192.22 102.80,215.78 123.20,204.00" fill="#5ed1ae"/>
<polygon points="102.80,215.78 102.80,239.34 123.20,227.56" fill="#5ed1ae"/>
<polygon points="123.20,-31.56 123.20,-8.00 143.60,-19.78" fill="#5ed1ae"/>
<polygon points="123.20,-8.00 123.20,15.55 143.60,3.78" fill="#5ed1ae"/>
<polygon points="123.20,15.55 123.20,39.11 143.60,27.33" fill="#5ed1ae"/>
<polygon points="123.20,39.11 123.20,62.67 143.60,50.89" fill="#5ed1ae"/>
<polygon points="123.20,62.67 123.20,86.22 143.60,74.44" fill="#5ed1ae"/>
<polygon points="123.20,86.22 123.20,109.78 143.60,98.00" fill="#5ed1ae"/>
<polygon points="123.20,109.78 123.20,133.33 143.60,121.56" fill="#5ed1ae"/>
<polygon points="123.20,133.33 123.20,156.89 143.60,145.11" fill="#5ed1ae"/>
<polygon points="123.20,156.89 123.20,180.45 143.60,168.67" fill="#5ed1ae"/>
<polygon points="123.20,180.45 123.20,204.00 143.60,192.22" fill="#5ed1ae"/>
<polygon points="123.20,204.00 123.20,227.56 143.60,215.78" fill="#5ed1ae"/>
<polygon points="123.20,227.56 123.20,251.11 143.60,239.34" fill="#5ed1ae"/>
<path d="M-19.60,0V180M0.80,0V180M21.20,0V180M41.60,0V180M62.00,0V180M82.40,0V180M102.80,0V180M123.20,0V180M143.60,0V180M-18.00,-230.86L142.00,-138.48M-18.00,-138.48L142.00,-230.86M-18.00,-207.30L142.00,-114.93M-18.00,-114.93L142.00,-207.30M-18.00,-183.75L142.00,-91.37M-18.00,-91.37L142.00,-183.75M-18.00,-160.19L142.00,-67.81M-18.00,-67.81L142.00,-160.19M-18.00,-136.64L142.00,-44.26M-18.00,-44.26L142.00,-136.64M-18.00,-113.08L142.00,-20.70M-18.00,-20.70L142.00,-113.08M-18.00,-89.52L142.00,2.85M-18.00,2.85L142.00,-89.52M-18.00,-65.97L142.00,26.41M-18.00,26.41L142.00,-65.97M-18.00,-42.41L142.00,49.96M-18.00,49.96L142.00,-42.41M-18.00,-18.86L142.00,73.52M-18.00,73.52L142.00,-18.86M-18.00,4.70L142.00,97.08M-18.00,97.08L142.00,4.70M-18.00,28.26L142.00,120.63M-18.00,120.63L142.00,28.26M-18.00,51.81L142.00,144.19M-18.00,144.19L142.00,51.81M-18.00,75.37L142.00,167.74M-18.00,167.74L142.00,75.37M-18.00,98.92L142.00,191.30M-18.00,191.30L142.00,98.92M-18.00,122.48L142.00,214.86M-18.00,214.86L142.00,122.48M-18.00,146.04L142.00,238.41M-18.00,238.41L142.00,146.04M-18.00,169.59L142.00,261.97M-18.00,261.97L142.00,169.59M-18.00,193.15L142.00,285.52M-18.00,285.52L142.00,193.15M-18.00,216.70L142.00,309.08M-18.00,309.08L142.00,216.70M-18.00,240.26L142.00,332.64M-18.00,332.64L142.00,240.26M-18.00,263.81L142.00,356.19M-18.00,356.19L142.00,263.81M-18.00,287.37L142.00,379.75M-18.00,379.75L142.00,287.37M-18.00,310.93L142.00,403.30M-18.00,403.30L142.00,310.93" stroke="#2a3139" stroke-width="2.3" fill="none"/>
</g></svg>
  <div class="sdiv" style="top:179px"></div>
  <div class="sdiv" style="top:577px"></div>
  <div class="sdiv" style="top:687px"></div>
<!--SIDE--><svg class="abs" style="left:0;top:180px" width="132" height="520" viewBox="0 180 132 520"><g fill="#fff"><rect x="53.8" y="201.8" width="13.2" height="16.8"/><rect x="53.8" y="221.8" width="13.2" height="10.2"/><rect x="70.8" y="201.8" width="13.4" height="10.2"/><rect x="70.8" y="214.8" width="13.4" height="17.2"/></g><path fill="#d9d9d9" fill-rule="evenodd" d="M73.05,295.34L75.77,296.81L72.38,302.67L69.75,301.05L65.70,303.39L65.79,306.48L59.01,306.48L59.10,303.39L55.05,301.05L52.42,302.67L49.03,296.81L51.75,295.34L51.75,290.66L49.03,289.19L52.42,283.33L55.05,284.95L59.10,282.61L59.01,279.52L65.79,279.52L65.70,282.61L69.75,284.95L72.38,283.33L75.77,289.19L73.05,290.66ZM66.70,293.00A4.3,4.3 0 1 0 58.10,293.00A4.3,4.3 0 1 0 66.70,293.00ZM87.26,282.00L88.90,281.94L88.90,285.26L87.26,285.20L86.01,287.36L86.89,288.75L84.02,290.41L83.25,288.96L80.75,288.96L79.98,290.41L77.11,288.75L77.99,287.36L76.74,285.20L75.10,285.26L75.10,281.94L76.74,282.00L77.99,279.84L77.11,278.45L79.98,276.79L80.75,278.24L83.25,278.24L84.02,276.79L86.89,278.45L86.01,279.84ZM84.10,283.60A2.1,2.1 0 1 0 79.90,283.60A2.1,2.1 0 1 0 84.10,283.60ZM87.26,300.50L88.90,300.44L88.90,303.76L87.26,303.70L86.01,305.86L86.89,307.25L84.02,308.91L83.25,307.46L80.75,307.46L79.98,308.91L77.11,307.25L77.99,305.86L76.74,303.70L75.10,303.76L75.10,300.44L76.74,300.50L77.99,298.34L77.11,296.95L79.98,295.29L80.75,296.74L83.25,296.74L84.02,295.29L86.89,296.95L86.01,298.34ZM84.10,302.10A2.1,2.1 0 1 0 79.90,302.10A2.1,2.1 0 1 0 84.10,302.10Z"/><g><path d="M58,380.4L80.6,358" stroke="#fff" stroke-width="3.8"/><circle cx="80.6" cy="358" r="5.7" fill="#fff"/><circle cx="58" cy="380.4" r="5.7" fill="#fff"/><circle cx="80.6" cy="358" r="2.4" fill="#2a3139"/><circle cx="58" cy="380.4" r="2.4" fill="#2a3139"/><path d="M60,360L79.5,379.5" stroke="#2a3139" stroke-width="8"/><path d="M58,358L81.5,381.5" stroke="#fff" stroke-width="4.6"/><circle cx="57.6" cy="357.6" r="6.4" fill="#fff"/><circle cx="81.6" cy="381.6" r="6.4" fill="#fff"/><path d="M54.5,354.5L50,350" stroke="#2a3139" stroke-width="5"/><circle cx="54.8" cy="354.8" r="2.6" fill="#2a3139"/><path d="M84.5,384.5L89,389" stroke="#2a3139" stroke-width="5"/><circle cx="84.4" cy="384.4" r="2.6" fill="#2a3139"/></g><path d="M49.50,440.63A24,24 0 0 1 55.65,434.15" stroke="#9aa0a4" stroke-width="0.8" fill="none"/><path d="M55.54,433.99A24,24 0 0 1 63.80,430.39" stroke="#b5babd" stroke-width="1.2" fill="none"/><path d="M63.70,429.90A24,24 0 0 1 69.31,429.41" stroke="#c8cccf" stroke-width="2.2" fill="none"/><path d="M69.32,428.91A24,24 0 0 1 76.57,430.32" stroke="#d2d5d8" stroke-width="3.2" fill="none"/><path d="M77.21,429.81A24,24 0 0 1 83.12,433.09" stroke="#d8dbde" stroke-width="4.6" fill="none"/><path d="M84.04,433.30A24,24 0 0 1 88.73,438.33" stroke="#d8dbde" stroke-width="5.4" fill="none"/><path d="M66.6,444.6L73.4,434.8" stroke="#d0d4d6" stroke-width="1.3"/><circle cx="65.8" cy="445.9" r="1.6" fill="none" stroke="#d0d4d6" stroke-width="1"/><defs><clipPath id="pieclip"><path d="M65.3,509.5V525.3L81.6,524.5A16.1,16.1 0 1 1 65.3,509.5Z"/><path d="M73.1,521.6V501.7A20,20 0 0 1 89.5,514.5Z"/></clipPath></defs><g clip-path="url(#pieclip)"><rect x="40" y="495" width="60" height="55" fill="#c9cdd1"/><path d="M8.40,459.49V470.57L18.00,465.03ZM8.40,470.57V481.66L18.00,476.12ZM8.40,481.66V492.74L18.00,487.20ZM8.40,492.74V503.83L18.00,498.29ZM8.40,503.83V514.91L18.00,509.37ZM8.40,514.91V526.00L18.00,520.46ZM8.40,526.00V537.09L18.00,531.54ZM8.40,537.09V548.17L18.00,542.63ZM8.40,548.17V559.26L18.00,553.71ZM8.40,559.26V570.34L18.00,564.80ZM8.40,570.34V581.43L18.00,575.88ZM8.40,581.43V592.51L18.00,586.97ZM18.00,465.03V476.12L27.60,470.57ZM18.00,476.12V487.20L27.60,481.66ZM18.00,487.20V498.29L27.60,492.74ZM18.00,498.29V509.37L27.60,503.83ZM18.00,509.37V520.46L27.60,514.91ZM18.00,520.46V531.54L27.60,526.00ZM18.00,531.54V542.63L27.60,537.09ZM18.00,542.63V553.71L27.60,548.17ZM18.00,553.71V564.80L27.60,559.26ZM18.00,564.80V575.88L27.60,570.34ZM18.00,575.88V586.97L27.60,581.43ZM18.00,586.97V598.05L27.60,592.51ZM27.60,459.49V470.57L37.20,465.03ZM27.60,470.57V481.66L37.20,476.12ZM27.60,481.66V492.74L37.20,487.20ZM27.60,492.74V503.83L37.20,498.29ZM27.60,503.83V514.91L37.20,509.37ZM27.60,514.91V526.00L37.20,520.46ZM27.60,526.00V537.09L37.20,531.54ZM27.60,537.09V548.17L37.20,542.63ZM27.60,548.17V559.26L37.20,553.71ZM27.60,559.26V570.34L37.20,564.80ZM27.60,570.34V581.43L37.20,575.88ZM27.60,581.43V592.51L37.20,586.97ZM37.20,465.03V476.12L46.80,470.57ZM37.20,476.12V487.20L46.80,481.66ZM37.20,487.20V498.29L46.80,492.74ZM37.20,498.29V509.37L46.80,503.83ZM37.20,509.37V520.46L46.80,514.91ZM37.20,520.46V531.54L46.80,526.00ZM37.20,531.54V542.63L46.80,537.09ZM37.20,542.63V553.71L46.80,548.17ZM37.20,553.71V564.80L46.80,559.26ZM37.20,564.80V575.88L46.80,570.34ZM37.20,575.88V586.97L46.80,581.43ZM37.20,586.97V598.05L46.80,592.51ZM46.80,459.49V470.57L56.40,465.03ZM46.80,470.57V481.66L56.40,476.12ZM46.80,481.66V492.74L56.40,487.20ZM46.80,492.74V503.83L56.40,498.29ZM46.80,503.83V514.91L56.40,509.37ZM46.80,514.91V526.00L56.40,520.46ZM46.80,526.00V537.09L56.40,531.54ZM46.80,537.09V548.17L56.40,542.63ZM46.80,548.17V559.26L56.40,553.71ZM46.80,559.26V570.34L56.40,564.80ZM46.80,570.34V581.43L56.40,575.88ZM46.80,581.43V592.51L56.40,586.97ZM56.40,465.03V476.12L66.00,470.57ZM56.40,476.12V487.20L66.00,481.66ZM56.40,487.20V498.29L66.00,492.74ZM56.40,498.29V509.37L66.00,503.83ZM56.40,509.37V520.46L66.00,514.91ZM56.40,520.46V531.54L66.00,526.00ZM56.40,531.54V542.63L66.00,537.09ZM56.40,542.63V553.71L66.00,548.17ZM56.40,553.71V564.80L66.00,559.26ZM56.40,564.80V575.88L66.00,570.34ZM56.40,575.88V586.97L66.00,581.43ZM56.40,586.97V598.05L66.00,592.51ZM66.00,459.49V470.57L75.60,465.03ZM66.00,470.57V481.66L75.60,476.12ZM66.00,481.66V492.74L75.60,487.20ZM66.00,492.74V503.83L75.60,498.29ZM66.00,503.83V514.91L75.60,509.37ZM66.00,514.91V526.00L75.60,520.46ZM66.00,526.00V537.09L75.60,531.54ZM66.00,537.09V548.17L75.60,542.63ZM66.00,548.17V559.26L75.60,553.71ZM66.00,559.26V570.34L75.60,564.80ZM66.00,570.34V581.43L75.60,575.88ZM66.00,581.43V592.51L75.60,586.97ZM75.60,465.03V476.12L85.20,470.57ZM75.60,476.12V487.20L85.20,481.66ZM75.60,487.20V498.29L85.20,492.74ZM75.60,498.29V509.37L85.20,503.83ZM75.60,509.37V520.46L85.20,514.91ZM75.60,520.46V531.54L85.20,526.00ZM75.60,531.54V542.63L85.20,537.09ZM75.60,542.63V553.71L85.20,548.17ZM75.60,553.71V564.80L85.20,559.26ZM75.60,564.80V575.88L85.20,570.34ZM75.60,575.88V586.97L85.20,581.43ZM75.60,586.97V598.05L85.20,592.51ZM85.20,459.49V470.57L94.80,465.03ZM85.20,470.57V481.66L94.80,476.12ZM85.20,481.66V492.74L94.80,487.20ZM85.20,492.74V503.83L94.80,498.29ZM85.20,503.83V514.91L94.80,509.37ZM85.20,514.91V526.00L94.80,520.46ZM85.20,526.00V537.09L94.80,531.54ZM85.20,537.09V548.17L94.80,542.63ZM85.20,548.17V559.26L94.80,553.71ZM85.20,559.26V570.34L94.80,564.80ZM85.20,570.34V581.43L94.80,575.88ZM85.20,581.43V592.51L94.80,586.97ZM94.80,465.03V476.12L104.40,470.57ZM94.80,476.12V487.20L104.40,481.66ZM94.80,487.20V498.29L104.40,492.74ZM94.80,498.29V509.37L104.40,503.83ZM94.80,509.37V520.46L104.40,514.91ZM94.80,520.46V531.54L104.40,526.00ZM94.80,531.54V542.63L104.40,537.09ZM94.80,542.63V553.71L104.40,548.17ZM94.80,553.71V564.80L104.40,559.26ZM94.80,564.80V575.88L104.40,570.34ZM94.80,575.88V586.97L104.40,581.43ZM94.80,586.97V598.05L104.40,592.51ZM104.40,459.49V470.57L114.00,465.03ZM104.40,470.57V481.66L114.00,476.12ZM104.40,481.66V492.74L114.00,487.20ZM104.40,492.74V503.83L114.00,498.29ZM104.40,503.83V514.91L114.00,509.37ZM104.40,514.91V526.00L114.00,520.46ZM104.40,526.00V537.09L114.00,531.54ZM104.40,537.09V548.17L114.00,542.63ZM104.40,548.17V559.26L114.00,553.71ZM104.40,559.26V570.34L114.00,564.80ZM104.40,570.34V581.43L114.00,575.88ZM104.40,581.43V592.51L114.00,586.97ZM114.00,465.03V476.12L123.60,470.57ZM114.00,476.12V487.20L123.60,481.66ZM114.00,487.20V498.29L123.60,492.74ZM114.00,498.29V509.37L123.60,503.83ZM114.00,509.37V520.46L123.60,514.91ZM114.00,520.46V531.54L123.60,526.00ZM114.00,531.54V542.63L123.60,537.09ZM114.00,542.63V553.71L123.60,548.17ZM114.00,553.71V564.80L123.60,559.26ZM114.00,564.80V575.88L123.60,570.34ZM114.00,575.88V586.97L123.60,581.43ZM114.00,586.97V598.05L123.60,592.51Z" fill="#e2e4e6"/><path d="M8.40,495V550M18.00,495V550M27.60,495V550M37.20,495V550M46.80,495V550M56.40,495V550M66.00,495V550M75.60,495V550M85.20,495V550M94.80,495V550M104.40,495V550M114.00,495V550M26,392.05L106,438.24M26,438.24L106,392.05M26,403.14L106,449.33M26,449.33L106,403.14M26,414.22L106,460.41M26,460.41L106,414.22M26,425.31L106,471.50M26,471.50L106,425.31M26,436.40L106,482.58M26,482.58L106,436.40M26,447.48L106,493.67M26,493.67L106,447.48M26,458.57L106,504.75M26,504.75L106,458.57M26,469.65L106,515.84M26,515.84L106,469.65M26,480.74L106,526.92M26,526.92L106,480.74M26,491.82L106,538.01M26,538.01L106,491.82M26,502.91L106,549.09M26,549.09L106,502.91M26,513.99L106,560.18M26,560.18L106,513.99M26,525.08L106,571.26M26,571.26L106,525.08M26,536.16L106,582.35M26,582.35L106,536.16M26,547.25L106,593.43M26,593.43L106,547.25M26,558.33L106,604.52M26,604.52L106,558.33M26,569.42L106,615.60M26,615.60L106,569.42M26,580.50L106,626.69M26,626.69L106,580.50M26,591.59L106,637.78M26,637.78L106,591.59M26,602.67L106,648.86M26,648.86L106,602.67" stroke="#2a3139" stroke-width="1.1" fill="none"/></g><polygon points="68.8,630.2 68.8,611.6 84.9,620.9" fill="#1fb49b"/><polygon points="68.8,630.2 84.9,620.9 84.9,639.5" fill="#1b9e89"/><polygon points="68.8,630.2 84.9,639.5 68.8,648.8" fill="#1fb49b"/><polygon points="68.8,630.2 68.8,648.8 52.7,639.5" fill="#1b9e89"/><polygon points="68.8,630.2 52.7,639.5 52.7,620.9" fill="#1fb49b"/><polygon points="68.8,630.2 52.7,620.9 68.8,611.6" fill="#1b9e89"/><path d="M68.8,630.2L68.8,611.6M68.8,630.2L84.9,620.9M68.8,630.2L84.9,639.5M68.8,630.2L68.8,648.8M68.8,630.2L52.7,639.5M68.8,630.2L52.7,620.9" stroke="#2a3139" stroke-width="2.2"/></svg><div class="abs" style="left:97px;top:1185px;width:37px;height:89px;background:#535a5e;border-radius:9px 0 0 9px"></div><svg class="abs" style="left:97px;top:1185px" width="37" height="89"><path d="M11.5,31.5L25,44.8L11.5,58.5" stroke="#d8dcdc" stroke-width="4.2" fill="none" stroke-linecap="butt"/></svg><svg class="abs" style="left:40px;top:1300px" width="52" height="52" viewBox="40 1300 52 52"><circle cx="66" cy="1324.8" r="17" fill="#c8cdd0"/><path d="M60.2,1319.2A5.9,5.9 0 1 1 69.5,1324C67.2,1325.6 66,1326.6 66,1329.5" stroke="#2a3139" stroke-width="3.4" fill="none"/><rect x="64.2" y="1332.2" width="3.6" height="3.6" fill="#2a3139"/></svg><div class="t" style="left:23px;top:1385px;font-size:24px;color:#e8e8e8;transform:scaleX(0.93);transform-origin:0 0">v0.8.132</div><!--/SIDE-->
 </div>
</div>
</body></html>
